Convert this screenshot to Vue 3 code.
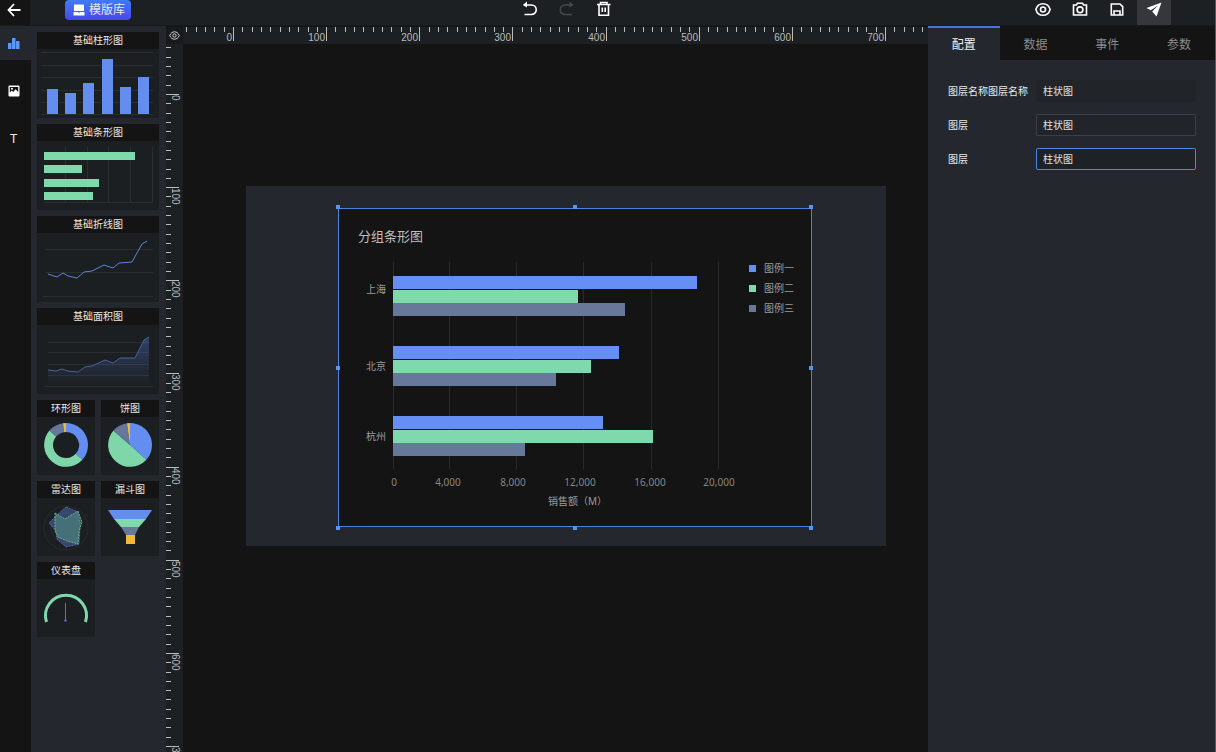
<script setup>
import { ref } from 'vue'

// Ruler ticks: one every ten units, a labelled one every hundred.
const makeTicks = (last) =>
  Array.from({ length: last + 6 }, (_, i) => i - 5).map((n) => ({
    n,
    at: Math.round(50 + n * 9.315),
    major: n % 10 === 0,
  }))
const ticksX = makeTicks(74)
const ticksY = makeTicks(70)
const labelX = (n) => String(n * 10)
const labelY = (n) => (n === 70 ? '300' : String(n * 10))

const columns = [
  [10, 40], [28, 44], [46, 34], [65, 10], [83, 38], [101, 28],
]
const rows = [
  [11, 91], [24, 38], [38, 55], [51, 49],
]

const slices = [
  { from: 0, to: 132, color: '#648df0' },
  { from: 132, to: 311, color: '#7fd6a8' },
  { from: 311, to: 352, color: '#66779b' },
  { from: 352, to: 360, color: '#f0b93c' },
]
const point = (deg, r) => {
  const a = ((deg - 90) * Math.PI) / 180
  return `${(29 + r * Math.cos(a)).toFixed(2)} ${(28 + r * Math.sin(a)).toFixed(2)}`
}
const arc = (s, inner) => {
  const large = s.to - s.from > 180 ? 1 : 0
  const outer = `M${point(s.from, 22)}A22 22 0 ${large} 1 ${point(s.to, 22)}`
  return inner
    ? `${outer}L${point(s.to, inner)}A${inner} ${inner} 0 ${large} 0 ${point(s.from, inner)}Z`
    : `${outer}L29 28Z`
}

const colors = ['#668ff5', '#80d9ac', '#67789a']
const groups = [
  { name: '上海', label: 85, top: 68, widths: [304, 185, 232] },
  { name: '北京', label: 162, top: 138, widths: [226, 198, 163] },
  { name: '杭州', label: 232, top: 208, widths: [210, 260, 132] },
]
const axis = [
  { line: 55, x: 56, text: '0' },
  { line: 111, x: 110, text: '4,000' },
  { line: 178, x: 175, text: '8,000' },
  { line: 245, x: 242, text: '12,000' },
  { line: 313, x: 312, text: '16,000' },
  { line: 380, x: 381, text: '20,000' },
]
const legend = ['图例一', '图例二', '图例三']
const handles = ['nw', 'n', 'ne', 'w', 'e', 'sw', 's', 'se']

const tabs = ['配置', '数据', '事件', '参数']
const activeTab = ref('配置')
const name = ref('柱状图')
const layerA = ref('柱状图')
const layerB = ref('柱状图')
</script>

<template>
  <div class="editor">
    <header class="topbar">
      <button class="back" aria-label="返回">
        <svg width="14" height="14" viewBox="0 0 14 14" fill="none" stroke="#fff" stroke-width="1.800">
          <path d="M13.500 7H1.500M7 1L1.500 7L7 13" />
        </svg>
      </button>
      <button class="templates">
        <svg width="12" height="12" viewBox="0 0 12 12" fill="#fff">
          <path d="M1 0.500H11V7H1ZM0.500 8H5L6 9L7 8H11.500V11.500H0.500Z" />
        </svg>
        模版库
      </button>
      <div class="tools">
        <button class="tool" aria-label="撤销">
          <svg width="16" height="16" viewBox="0 0 16 16" fill="none" stroke="#fff" stroke-width="1.600">
            <path d="M2.500 4H9.500A4.500 4.500 0 0 1 9.500 13.500H2.500" /><path d="M5 0.500L0.800 4L5 6.500Z" fill="#fff" stroke="none" />
          </svg>
        </button>
        <button class="tool" aria-label="重做">
          <svg width="16" height="16" viewBox="0 0 16 16" fill="none" stroke="#45484b" stroke-width="1.600">
            <path d="M13 4H6A4.500 4.500 0 0 0 6 13.500H13" /><path d="M10.500 0.500L14.700 4L10.500 6.500Z" fill="#45484b" stroke="none" />
          </svg>
        </button>
        <button class="tool" aria-label="删除">
          <svg width="16" height="16" viewBox="0 0 16 16" fill="none" stroke="#fff" stroke-width="1.600">
            <path d="M1 3.500H14.500M3 3.500V14.200H12.500V3.500M4.500 3V1.500H11V3M6.300 6.500V11M9.200 6.500V11" />
          </svg>
        </button>
      </div>
      <div class="actions">
        <button class="tool" aria-label="预览">
          <svg width="16" height="16" viewBox="0 0 16 16" fill="none" stroke="#fff" stroke-width="1.600">
            <path d="M0.900 8.500C2 4.500 5 2.700 8 2.700S14 4.500 15.100 8.500C14 12.500 11 14.300 8 14.300S2 12.500 0.900 8.500Z" /><circle cx="8" cy="8.500" r="2.500" />
          </svg>
        </button>
        <button class="tool" aria-label="截图">
          <svg width="16" height="16" viewBox="0 0 16 16" fill="none" stroke="#fff" stroke-width="1.600">
            <path d="M1.500 4H4.300L5.500 2.300H10.500L11.700 4H14.500V14H1.500Z" /><circle cx="8" cy="8.800" r="2.900" />
          </svg>
        </button>
        <button class="tool" aria-label="保存">
          <svg width="16" height="16" viewBox="0 0 16 16" fill="none" stroke="#fff" stroke-width="1.600">
            <path d="M2.300 3H11L13.700 5.700V14H2.300ZM5 13.800V10H11V13.800" />
          </svg>
        </button>
        <button class="tool send" aria-label="发布">
          <svg width="16" height="16" viewBox="0 0 16 16" fill="#fff">
            <path d="M15.500 1.500L0.500 7L4.800 9.200L12 4.500L6.200 10.500L10.500 15.500Z" />
          </svg>
        </button>
      </div>
    </header>

    <div class="workspace">
      <nav class="rail">
        <button class="rail-item current" aria-label="图表">
          <svg width="12" height="12" viewBox="0 0 12 12" fill="#5a98f5">
            <path d="M0 6h3.500v6H0zM4 1h3.500v11H4zM8 4h3.500v8H8z" />
          </svg>
        </button>
        <button class="rail-item" aria-label="图片">
          <svg width="12" height="12" viewBox="0 0 12 12">
            <rect x="0.500" y="0.500" width="11" height="11" rx="1" fill="#fff" />
            <path d="M1.800 2H10.200V7L7.600 4.300L5.200 7L3.800 5.600L1.800 7.500Z" fill="#141414" />
            <circle cx="4" cy="3.800" r="1" fill="#fff" />
          </svg>
        </button>
        <button class="rail-item letter" aria-label="文本">T</button>
      </nav>

      <aside class="library">
        <figure class="card wide">
          <figcaption>基础柱形图</figcaption>
          <svg viewBox="0 0 122 69">
            <path class="grid" d="M4 3.500H116M4 16.500H116M4 28.500H116M4 41.500H116M4 53.500H116M4 65.500H116" />
            <rect v-for="c in columns" :key="c[0]" :x="c[0]" :y="c[1]" width="11" :height="65 - c[1]" fill="#648df0" />
          </svg>
        </figure>
        <figure class="card wide">
          <figcaption>基础条形图</figcaption>
          <svg viewBox="0 0 122 69">
            <path class="grid" d="M28.500 6V61M50.500 6V61M71.500 6V61M93.500 6V61M115.500 6V61M7 61.500H116" />
            <rect v-for="r in rows" :key="r[0]" x="7" :y="r[0]" :width="r[1]" height="8" fill="#80d9ac" />
          </svg>
        </figure>
        <figure class="card wide">
          <figcaption>基础折线图</figcaption>
          <svg viewBox="0 0 122 69">
            <path class="grid" d="M8 16.500H116M8 39.500H116M6 63.500H116" />
            <path d="M11 41L20 44L26 40L31 43L40 45L47 39L55 38L67 32L76 35L82 30L95 29L105 11L110 8" fill="none" stroke="#5d82dd" />
          </svg>
        </figure>
        <figure class="card wide">
          <figcaption>基础面积图</figcaption>
          <svg viewBox="0 0 122 69">
            <defs>
              <linearGradient id="area" x1="0" y1="0" x2="0" y2="1">
                <stop offset="0" stop-color="#4f74cf" stop-opacity="0.400" />
                <stop offset="1" stop-color="#4f74cf" stop-opacity="0" />
              </linearGradient>
            </defs>
            <path class="grid" d="M11 17.500H112M11 27.500H112M11 39.500H112M11 50.500H112M7 61.500H116" />
            <path d="M11 45L19 46L25 44L31 46L41 47L48 42L55 41L68 35L76 38L83 33L98 33L107 15L112 12V61H11Z" fill="url(#area)" />
            <path d="M11 45L19 46L25 44L31 46L41 47L48 42L55 41L68 35L76 38L83 33L98 33L107 15L112 12" fill="none" stroke="#486298" />
          </svg>
        </figure>
        <figure class="card">
          <figcaption>环形图</figcaption>
          <svg viewBox="0 0 58 58">
            <path v-for="s in slices" :key="s.from" :d="arc(s, 13)" :fill="s.color" />
          </svg>
        </figure>
        <figure class="card">
          <figcaption>饼图</figcaption>
          <svg viewBox="0 0 58 58">
            <path v-for="s in slices" :key="s.from" :d="arc(s, 0)" :fill="s.color" />
          </svg>
        </figure>
        <figure class="card">
          <figcaption>雷达图</figcaption>
          <svg viewBox="0 0 58 58">
            <circle cx="29" cy="30" r="22" fill="none" stroke="#282b2e" />
            <circle cx="29" cy="30" r="15" fill="none" stroke="#282b2e" />
            <path d="M29 9L41 14L43 25L42 46L29 49L20 41L19 33L12 25L20 17Z" fill="#5f83d8" fill-opacity="0.400" stroke="#4f6cae" stroke-dasharray="2 1" />
            <path d="M18 15L28 21L41 13L45 24L42 33L41 46L30 43L21 39L18 33Z" fill="#5fae8c" fill-opacity="0.400" stroke="#6fae94" stroke-dasharray="2 1" />
          </svg>
        </figure>
        <figure class="card">
          <figcaption>漏斗图</figcaption>
          <svg viewBox="0 0 58 58">
            <path d="M7 12H51L45 21H13Z" fill="#648df0" />
            <path d="M13 21H45L38 29H20Z" fill="#80d9ac" />
            <path d="M20 29H38L34 37H25Z" fill="#67789a" />
            <path d="M25 37H34V46H25Z" fill="#f0b93c" />
          </svg>
        </figure>
        <figure class="card">
          <figcaption>仪表盘</figcaption>
          <svg viewBox="0 0 58 58">
            <path d="M9.500 43A20.500 20.500 0 1 1 48.500 43" fill="none" stroke="#80d9ac" stroke-width="3" />
            <path d="M28.500 24V42" stroke="#4f74cf" />
            <circle cx="28.500" cy="41.500" r="1.200" fill="#4f74cf" />
          </svg>
        </figure>
      </aside>

      <main class="board">
        <button class="corner" aria-label="显示标尺">
          <svg width="11" height="11" viewBox="0 0 12 12" fill="none" stroke="#e4e4e4">
            <path d="M0.800 6C2 3 4 2 6 2S10 3 11.200 6C10 9 8 10 6 10S2 9 0.800 6Z" /><circle cx="6" cy="6" r="1.800" />
          </svg>
        </button>
        <div class="ruler-x">
          <svg width="100%" height="17">
            <template v-for="t in ticksX" :key="t.n">
              <rect :x="t.at" y="0" width="1" :height="t.major ? 14 : 5" />
              <text v-if="t.major" :x="t.at - 1" y="14" text-anchor="end">{{ labelX(t.n) }}</text>
            </template>
          </svg>
        </div>
        <div class="ruler-y">
          <svg width="17" height="100%">
            <template v-for="t in ticksY" :key="t.n">
              <rect x="0" :y="t.at" :width="t.major ? 13 : 5" height="1" />
              <text v-if="t.major" :transform="`translate(6 ${t.at + 1}) rotate(90)`">{{ labelY(t.n) }}</text>
            </template>
          </svg>
        </div>
        <div class="canvas">
          <section class="stage">
            <div class="selection">
              <svg class="chart" viewBox="0 0 474 319">
                <text class="chart-title" x="20" y="33">分组条形图</text>
                <rect v-for="a in axis" :key="a.line" :x="a.line" y="54" width="1" height="207" fill="#2a2a2a" />
                <g v-for="g in groups" :key="g.name">
                  <text class="category" x="48" :y="g.label" text-anchor="end">{{ g.name }}</text>
                  <rect v-for="(w, i) in g.widths" :key="i" x="55" :y="g.top + i * 14 - (i > 1 ? 1 : 0)" :width="w" height="13" :fill="colors[i]" />
                </g>
                <text v-for="a in axis" :key="a.text" class="tick" :x="a.x" y="278" text-anchor="middle">{{ a.text }}</text>
                <text class="category" x="210" y="297">销售额（M）</text>
                <g v-for="(l, i) in legend" :key="l">
                  <rect x="411" :y="57 + i * 20" width="7" height="7" :fill="colors[i]" />
                  <text class="category" x="426" :y="64 + i * 20">{{ l }}</text>
                </g>
              </svg>
              <i v-for="h in handles" :key="h" class="handle" :class="h"></i>
            </div>
          </section>
        </div>
      </main>

      <aside class="panel">
        <div class="tabs" role="tablist">
          <button v-for="t in tabs" :key="t" role="tab" class="tab" :class="{ active: t === activeTab }" :aria-selected="t === activeTab" @click="activeTab = t">{{ t }}</button>
        </div>
        <form class="fields" @submit.prevent>
          <label for="layer-name">图层名称图层名称</label>
          <input id="layer-name" v-model="name" type="text" class="plain" />
          <label for="layer-a">图层</label>
          <input id="layer-a" v-model="layerA" type="text" />
          <label for="layer-b">图层</label>
          <input id="layer-b" v-model="layerB" type="text" class="focused" />
        </form>
      </aside>
    </div>
  </div>
</template>

<style>
body {
  background: #141414;
}
</style>

<style scoped>
.editor {
  display: flex;
  flex-direction: column;
  height: 100vh;
  overflow: hidden;
  box-sizing: border-box;
  border-right: 1px solid #55575b;
  background: #141414;
  color: #e8e8e8;
  font-family: "Noto Sans", "Noto Sans CJK SC", sans-serif;
  font-size: 10px;
}
.editor *,
.editor *::before {
  box-sizing: border-box;
}
button {
  border: 0;
  padding: 0;
  margin: 0;
  background: none;
  color: inherit;
  font: inherit;
  display: flex;
  align-items: center;
  justify-content: center;
  cursor: pointer;
}
svg {
  display: block;
  flex: none;
}

.topbar {
  display: flex;
  align-items: flex-start;
  flex: none;
  height: 26px;
  background: #1d2023;
  border-bottom: 1px solid #17191b;
}
.back {
  width: 30px;
  height: 25px;
  padding: 0 3px 6px 0;
  background: #141414;
}
.templates {
  width: 66px;
  height: 20px;
  margin-left: 35px;
  padding-left: 2px;
  gap: 4px;
  border-radius: 4px;
  background: linear-gradient(#3f7bf6, #4748ee);
  font-size: 12px;
  line-height: 18px;
  white-space: nowrap;
}
.tools {
  display: flex;
  flex: 1;
  justify-content: center;
  gap: 3px;
  padding-right: 24px;
}
.actions {
  display: flex;
  gap: 3px;
  padding-right: 44px;
}
.tool {
  width: 34px;
  height: 25px;
  padding-bottom: 7px;
}
.send {
  background: #35373b;
}

.workspace {
  display: flex;
  flex: 1;
  min-height: 0;
}
.rail {
  display: flex;
  flex-direction: column;
  gap: 14px;
  width: 31px;
  flex: none;
}
.rail-item {
  height: 34px;
  padding-right: 4px;
}
.rail-item.current {
  background: #24282e;
}
.letter {
  padding-bottom: 3px;
  font-size: 13px;
}

.library {
  display: grid;
  grid-template-columns: 1fr 1fr;
  align-content: start;
  gap: 6px;
  width: 135px;
  flex: none;
  padding: 6px 7px 6px 6px;
  background: #24282e;
}
.card {
  margin: 0;
  background: #1c1f21;
}
.wide {
  grid-column: span 2;
}
.card svg {
  width: 100%;
}
figcaption {
  height: 17px;
  line-height: 17px;
  text-align: center;
  background: #141414;
}
.grid {
  fill: none;
  stroke: #2b2e31;
}

.board {
  display: grid;
  grid-template: 17px 1fr / 17px 1fr;
  flex: 1;
  min-width: 0;
  padding-top: 1px;
}
.corner {
  background: #17191b;
}
.ruler-x,
.ruler-y {
  overflow: hidden;
  min-width: 0;
  min-height: 0;
  background: #1d2023;
  fill: #b9bbbd;
  font-family: "Liberation Sans", sans-serif;
}
.canvas {
  position: relative;
  overflow: hidden;
}
.stage {
  position: absolute;
  left: 63px;
  top: 142px;
  width: 640px;
  height: 360px;
  background: #24282e;
}
.selection {
  position: absolute;
  left: 92px;
  top: 22px;
  width: 474px;
  height: 319px;
  border: 1px solid #4a82e0;
  background: #141414;
}
.chart {
  width: 474px;
  height: 319px;
  margin: -1px;
}
.chart-title {
  fill: #bdbdbd;
  font-size: 13px;
}
.category {
  fill: #9b9b9b;
}
.tick {
  fill: #858585;
}
.handle {
  position: absolute;
  width: 4px;
  height: 4px;
  background: #5c93ee;
}
.nw, .n, .ne { top: -4px; }
.w, .e { top: calc(50% - 2px); }
.sw, .s, .se { bottom: -4px; }
.nw, .w, .sw { left: -3px; }
.n, .s { left: calc(50% - 2px); }
.ne, .e, .se { right: -2px; }

.panel {
  width: 287px;
  flex: none;
  background: #24282e;
}
.tabs {
  display: flex;
}
.tab {
  flex: 1;
  height: 34px;
  border-top: 2px solid #141414;
  background: #141414;
  color: #8c8c8c;
  font-size: 12px;
}
.tab.active {
  border-top-color: #4474cc;
  background: #24282e;
  color: #f0f0f0;
}
.fields {
  display: grid;
  grid-template-columns: 88px 1fr;
  align-items: center;
  row-gap: 12px;
  padding: 20px 19px 20px 20px;
}
label {
  padding-bottom: 2px;
  white-space: nowrap;
}
input {
  width: 100%;
  height: 22px;
  padding: 0 6px 2px;
  border: 1px solid #3a3f46;
  border-radius: 1px;
  outline: 0;
  background: #212529;
  color: #e0e0e0;
  font: inherit;
}
input.plain {
  border-color: #212429;
  background: #212429;
}
input.focused {
  border-color: #4a86e8;
  border-radius: 2px;
  background: #1e2226;
}
</style>
